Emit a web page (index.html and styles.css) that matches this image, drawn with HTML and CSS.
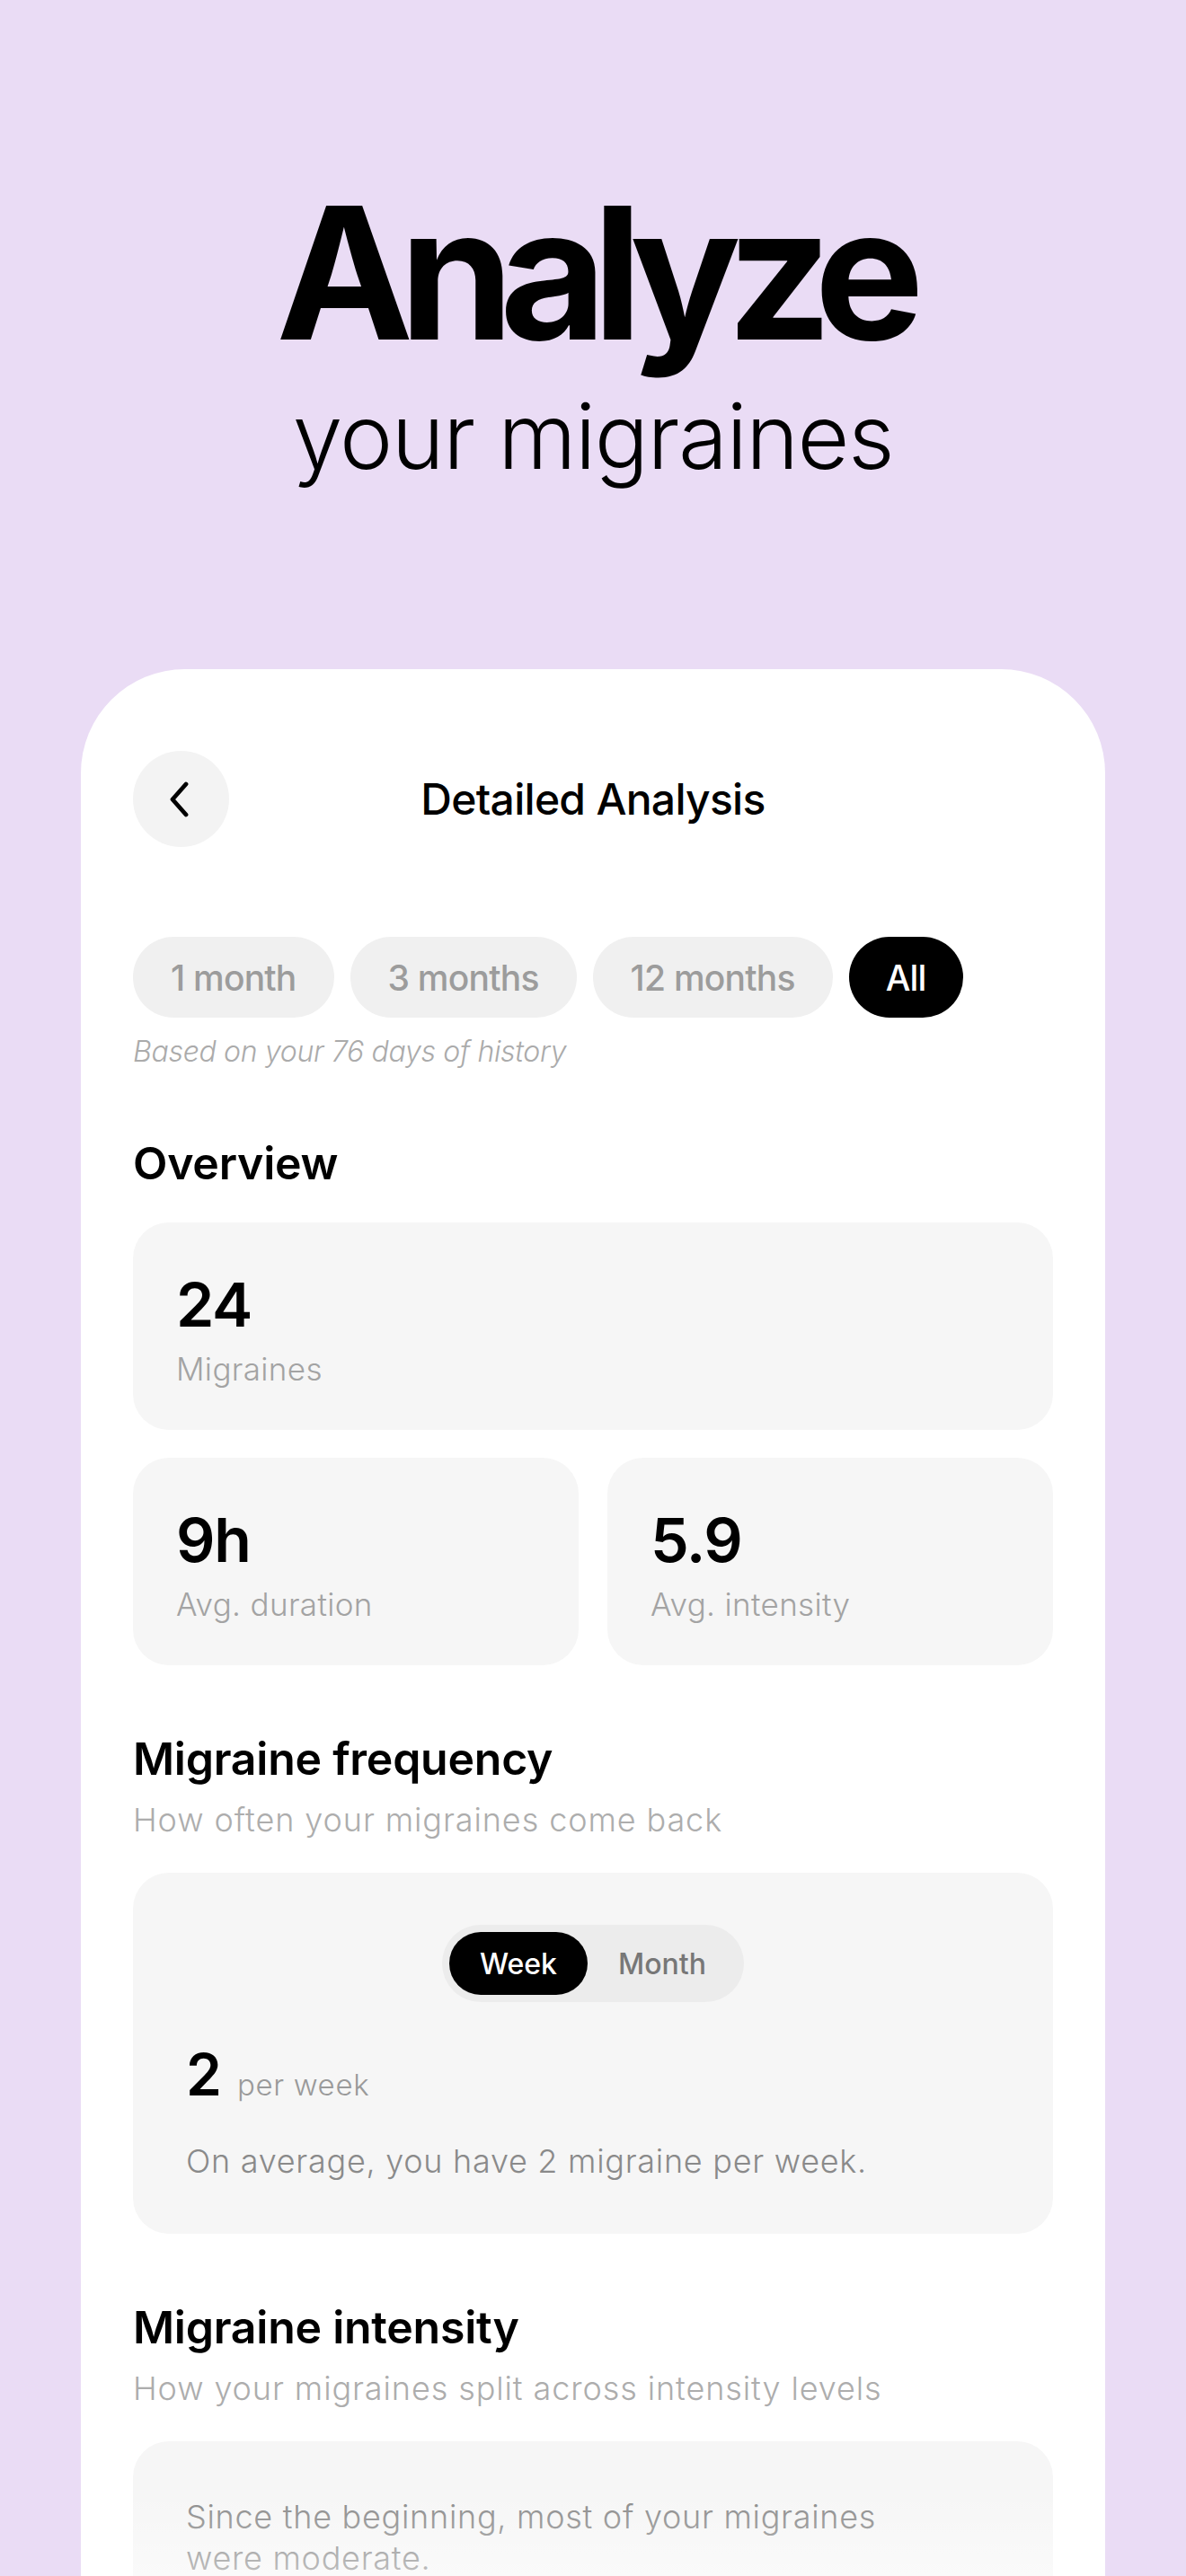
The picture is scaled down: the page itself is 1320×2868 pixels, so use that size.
FILE: index.html
```html
<!DOCTYPE html>
<html lang="en">
<head>
  <meta charset="UTF-8" />
  <meta name="viewport" content="width=device-width, initial-scale=1" />
  <title>Analyze your migraines</title>
  <link rel="stylesheet" href="styles.css">
</head>
<body>

  <header class="hero">
    <h1>Analyze</h1>
    <p>your migraines</p>
  </header>

  <main class="phone">

    <!-- Top bar -->
    <div class="topbar">
      <button class="back-btn" aria-label="Back">
        <svg width="26" height="40" viewBox="0 0 26 40">
          <path d="M20 3 L5 20 L20 37" fill="none" stroke="#000" stroke-width="4.8" stroke-linecap="round" stroke-linejoin="round" />
        </svg>
      </button>
      <h2>Detailed Analysis</h2>
      <span></span>
    </div>

    <!-- Period filter -->
    <div class="chips">
      <button class="chip">1 month</button>
      <button class="chip">3 months</button>
      <button class="chip">12 months</button>
      <button class="chip active">All</button>
    </div>
    <p class="hint">Based on your 76 days of history</p>

    <!-- Overview -->
    <h3 class="section-title first">Overview</h3>
    <div class="stats">
      <div class="stat wide">
        <div class="stat-value">24</div>
        <div class="stat-label">Migraines</div>
      </div>
      <div class="stat">
        <div class="stat-value">9h</div>
        <div class="stat-label">Avg. duration</div>
      </div>
      <div class="stat">
        <div class="stat-value">5.9</div>
        <div class="stat-label">Avg. intensity</div>
      </div>
    </div>

    <!-- Frequency -->
    <h3 class="section-title">Migraine frequency</h3>
    <p class="section-sub">How often your migraines come back</p>
    <div class="panel">
      <div class="toggle">
        <span class="toggle-item on">Week</span>
        <span class="toggle-item">Month</span>
      </div>
      <div class="rate">
        <span class="rate-num">2</span>
        <span class="rate-unit">per week</span>
      </div>
      <p class="note">On average, you have 2 migraine per week.</p>
    </div>

    <!-- Intensity -->
    <h3 class="section-title">Migraine intensity</h3>
    <p class="section-sub">How your migraines split across intensity levels</p>
    <div class="panel intensity">
      <p class="note">Since the beginning, most of your migraines were moderate.</p>
    </div>

  </main>

</body>
</html>
```

FILE: styles.css
```css
* {
  box-sizing: border-box;
}

html,
body {
  height: 2868px;
}

body {
  margin: 0;
  overflow: hidden;
  background-color: #eadcf5;
  font-family: Inter, "Noto Sans", sans-serif;
  color: #000;
}

.hero {
  padding-top: 201px;
  padding-bottom: 209px;
  text-align: center;
}

.hero h1 {
  margin: 0;
  font-size: 205px;
  line-height: 205px;
  font-weight: 700;
  letter-spacing: -0.077em;
}

.hero p {
  margin: 30px 0 0;
  font-size: 100px;
  line-height: 100px;
  font-weight: 300;
  letter-spacing: -0.015em;
}

.phone {
  position: relative;
  margin: 0 90px;
  min-height: 2200px;
  padding: 91px 58px 0;
  background-color: #fff;
  border-radius: 116px 116px 0 0;
}

/* white fade over the bottom of the screen */
.phone::after {
  content: "";
  position: absolute;
  left: 0;
  right: 0;
  top: 2030px;
  height: 93px;
  background: linear-gradient(rgba(255,255,255,0), rgba(255,255,255,0.45));
}

.topbar {
  display: grid;
  grid-template-columns: 107px 1fr 107px;
  align-items: center;
}

.back-btn {
  width: 107px;
  height: 107px;
  border: none;
  border-radius: 50%;
  background-color: #f3f3f3;
  display: flex;
  align-items: center;
  justify-content: center;
  padding: 0 4px 0 0;
}

.topbar h2 {
  margin: 0;
  text-align: center;
  font-size: 48px;
  line-height: 48px;
  font-weight: 500;
  letter-spacing: -0.015em;
}

.chips {
  display: flex;
  gap: 18px;
  margin-top: 100px;
}

.chip {
  height: 90px;
  padding: 0 42px;
  border: none;
  border-radius: 45px;
  background-color: #f0f0f0;
  color: #9c9c9c;
  font-family: inherit;
  font-size: 39px;
  font-weight: 500;
  letter-spacing: -0.02em;
}

.chip.active {
  background-color: #000;
  color: #fff;
  padding: 0 41px;
}

.hint {
  margin: 18px 0 0;
  font-size: 32px;
  line-height: 40px;
  font-style: italic;
  font-weight: 300;
  color: #ababab;
  letter-spacing: -0.01em;
}

.section-title {
  margin: 74px 0 0;
  font-size: 50px;
  line-height: 60px;
  font-weight: 600;
  letter-spacing: -0.005em;
}

.section-sub {
  margin: 16px 0 0;
  font-size: 36px;
  line-height: 44px;
  font-weight: 300;
  color: #adadad;
  letter-spacing: 0.025em;
}

.stats {
  display: grid;
  grid-template-columns: 1fr 1fr;
  gap: 31px 32px;
  margin-top: 36px;
}

.stat {
  padding: 57px 48px 46px;
  border-radius: 40px;
  background-color: #f6f6f6;
}

.stat.wide {
  grid-column: span 2;
}

.stat-value {
  font-size: 68px;
  line-height: 68px;
  font-weight: 600;
  letter-spacing: -0.02em;
}

.stat-label {
  margin-top: 16px;
  font-size: 35px;
  line-height: 44px;
  font-weight: 300;
  color: #a3a3a3;
  letter-spacing: 0.01em;
}

.panel {
  margin-top: 37px;
  padding: 58px 59px 59px;
  border-radius: 40px;
  background-color: #f6f6f6;
}

.toggle {
  display: flex;
  width: fit-content;
  margin: 0 auto;
  padding: 8px;
  border-radius: 43px;
  background-color: #ececec;
}

.toggle-item {
  height: 70px;
  padding: 0 34px;
  border-radius: 35px;
  display: flex;
  align-items: center;
  font-size: 32px;
  font-weight: 500;
  color: #777;
  letter-spacing: 0;
}

.toggle-item.on {
  background-color: #000;
  color: #fff;
}

.rate {
  margin-top: 49px;
  display: flex;
  align-items: baseline;
  gap: 17px;
  line-height: 64px;
}

.rate-num {
  font-size: 64px;
  font-weight: 600;
}

.rate-unit {
  font-size: 33px;
  font-weight: 300;
  color: #9a9a9a;
  letter-spacing: 0.02em;
}

.note {
  margin: 31px 0 0;
  font-size: 36px;
  line-height: 44px;
  font-weight: 300;
  color: #8a8a8a;
  letter-spacing: 0.02em;
}

.intensity {
  padding-top: 61px;
}

.intensity .note {
  margin: 0;
  max-width: 820px;
  line-height: 46px;
}
```
